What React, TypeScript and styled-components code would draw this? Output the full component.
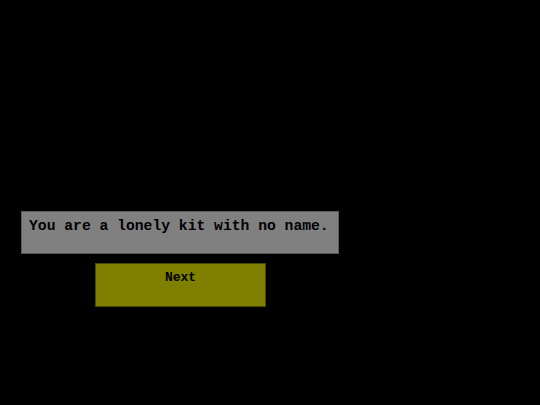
import React from 'react'
import styled, { createGlobalStyle } from 'styled-components'

const GlobalStyle = createGlobalStyle`
  html, body {
    margin: 0;
    padding: 0;
    background: #000;
  }

  body {
    font-family: "Courier New", Courier, "Nimbus Mono PS", "Nimbus Mono L", FreeMono, "Liberation Mono", monospace;
  }
`

const StyledScreen = styled.div`
  display: flex;
  flex-direction: column;
  align-items: flex-start;
  width: 540px;
  height: 405px;
  padding: 211px 0 0 21px;
  box-sizing: border-box;

  background: #000;
`

const StyledDialog = styled.div`
  width: 318px;
  height: 43px;
  padding: 6px 7px;
  box-sizing: border-box;

  font-size: 14.7px;
  font-weight: bold;
  color: #000;

  background: #808080;
  border: 1px solid #5a5a5a;
`

const StyledButton = styled.button`
  display: flex;
  justify-content: center;
  align-items: flex-start;
  width: 171px;
  height: 44px;
  margin: 9px 0 0 74px;
  padding: 6px 0 0;
  box-sizing: border-box;

  font-family: inherit;
  font-size: 13px;
  font-weight: bold;
  color: #000;

  background: #808000;
  border: 1px solid #4a4a00;
  cursor: pointer;
`

const App: React.FC = () => (
  <>
    <GlobalStyle />
    <StyledScreen>
      <StyledDialog>
        You are a lonely kit with no name.
      </StyledDialog>
      <StyledButton type="button">
        Next
      </StyledButton>
    </StyledScreen>
  </>
)

export default App
